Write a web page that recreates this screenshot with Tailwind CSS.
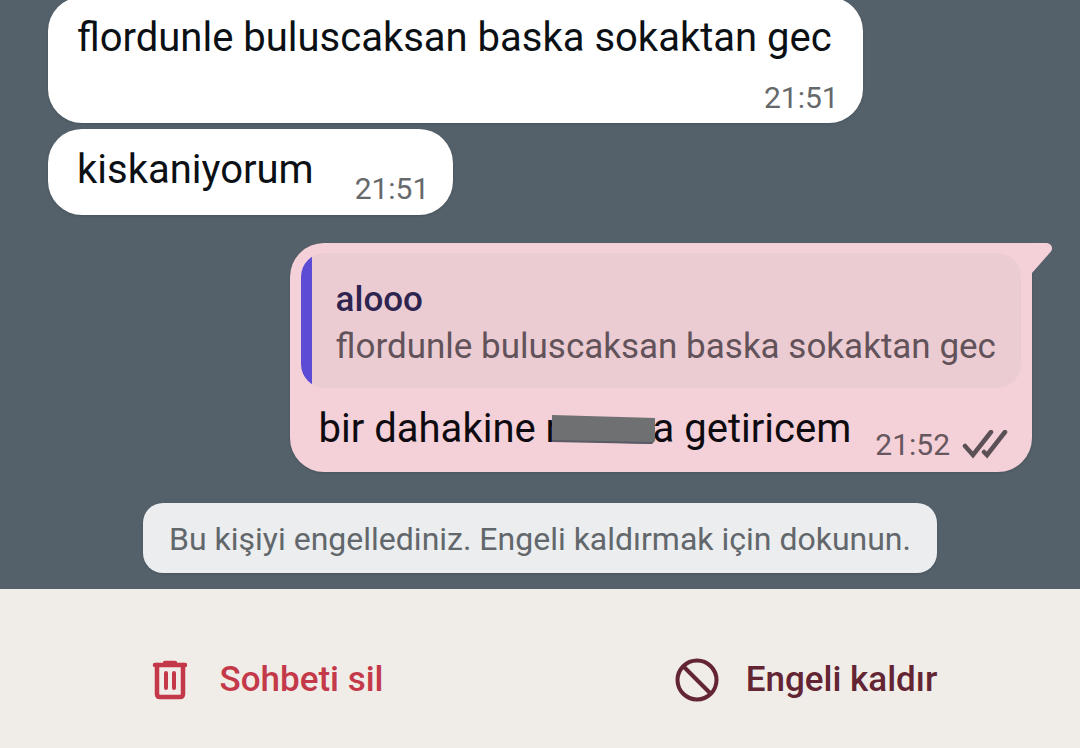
<!DOCTYPE html>
<html lang="tr">
<head>
    <meta charset="UTF-8">
    <meta name="viewport" content="width=device-width, initial-scale=1.0">
    <title>Sohbet</title>
    <script src="https://cdn.jsdelivr.net/npm/@tailwindcss/browser@4"></script>
</head>
<body class="bg-[#54616a] font-['Roboto',sans-serif] h-screen flex flex-col overflow-hidden">

    <!-- Messages, pinned to the newest one -->
    <main class="flex-1 min-h-0 flex flex-col justify-end px-12 pb-4">

        <div class="self-start shrink-0 bg-white rounded-[34px] shadow-sm pl-[29px] pr-6 pt-[17px] pb-[7px] flex flex-col gap-[18px]">
            <p class="text-[40px] leading-[48px] text-[#0b1014] pr-[7px] whitespace-nowrap">flordunle buluscaksan baska sokaktan gec</p>
            <time class="self-end text-[30px] leading-[36px] text-[#66696b]">21:51</time>
        </div>

        <div class="self-start shrink-0 mt-1.5 bg-white rounded-[34px] shadow-sm pl-[29px] pr-6 pt-[17px] pb-2 flex items-end gap-[41px]">
            <p class="text-[40px] leading-[48px] text-[#0b1014] mb-[13px]">kiskaniyorum</p>
            <time class="text-[30px] leading-[36px] text-[#66696b]">21:51</time>
        </div>

        <div class="self-end shrink-0 relative mt-7 bg-[#f4d0d8] rounded-[34px] rounded-tr-none shadow-sm px-[11px] pt-[10px] pb-[9px]">
            <svg class="absolute top-0 left-full -ml-px" width="21" height="30" viewBox="0 0 21 30" fill="#f4d0d8">
                <path d="M0 0H15C20 0 23 5 19.5 9L1 30H0Z"/>
            </svg>
            <!-- Quoted message -->
            <blockquote class="rounded-[24px] overflow-hidden bg-[#ecccd3] flex">
                <span class="w-[11px] bg-[#5b4bd5]"></span>
                <div class="px-6 pt-[23px] pb-[18px] text-[35px] leading-[47px] whitespace-nowrap">
                    <p class="font-medium text-[#2d2450]">alooo</p>
                    <p class="text-[#62525a]">flordunle buluscaksan baska sokaktan gec</p>
                </div>
            </blockquote>
            <div class="mt-[17px] pl-[18px] pr-[13px] flex items-end gap-6">
                <p class="text-[40px] leading-[48px] text-[#0e0b10] mb-[10px] whitespace-nowrap">bir dahakine <span class="relative inline-block w-[107px]">r<svg class="absolute left-[6px] top-[10px]" width="104" height="30" viewBox="0 0 104 30"><path d="M0 0L103 3V26L100 29L0 26Z" fill="#6e7072"/><path d="M0 25L101 27L100 29L0 27Z" fill="#5a5a66"/></svg></span>a getiricem</p>
                <div class="ml-auto flex items-center gap-3">
                    <time class="text-[30px] leading-[36px] text-[#66565d]">21:52</time>
                    <svg width="46" height="30" viewBox="0 0 46 30" fill="none" stroke="#5c5057" stroke-width="4.5" stroke-linecap="round">
                        <path d="M3 16L11 25L29 2"/>
                        <path d="M22 22L25 25L43 2"/>
                    </svg>
                </div>
            </div>
        </div>

        <button type="button" class="self-center shrink-0 mt-[31px] bg-[#ebedef] rounded-[20px] shadow-sm px-[26px] pt-[17px] pb-[15px] text-[32px] leading-[38px] text-[#62676b] whitespace-nowrap">Bu kişiyi engellediniz. Engeli kaldırmak için dokunun.</button>
    </main>

    <footer class="shrink-0 bg-[#f0ece7] grid grid-cols-2 pt-[69px] pb-[46px] text-[35px] leading-[44px] font-medium">
        <button type="button" class="flex items-center justify-center gap-8 pr-1 text-[#c4394a]">
            <svg width="35" height="40" viewBox="0 0 35 40" fill="none" stroke="currentColor" stroke-width="4.5" stroke-linecap="round" stroke-linejoin="round">
                <path d="M3 5H33M13 3H23"/>
                <path d="M5 5V34Q5 37 8 37H28Q31 37 31 34V5"/>
                <path d="M14 13V28M22 13V28" stroke-width="4"/>
            </svg>
            Sohbeti sil
        </button>
        <button type="button" class="flex items-center justify-center gap-[27px] pr-2 text-[#632433]">
            <svg width="44" height="44" viewBox="0 0 44 44" fill="none" stroke="currentColor" stroke-width="4">
                <circle cx="22" cy="22" r="19.5"/>
                <path d="M8.5 8.5L35.5 35.5"/>
            </svg>
            Engeli kaldır
        </button>
    </footer>

</body>
</html>
